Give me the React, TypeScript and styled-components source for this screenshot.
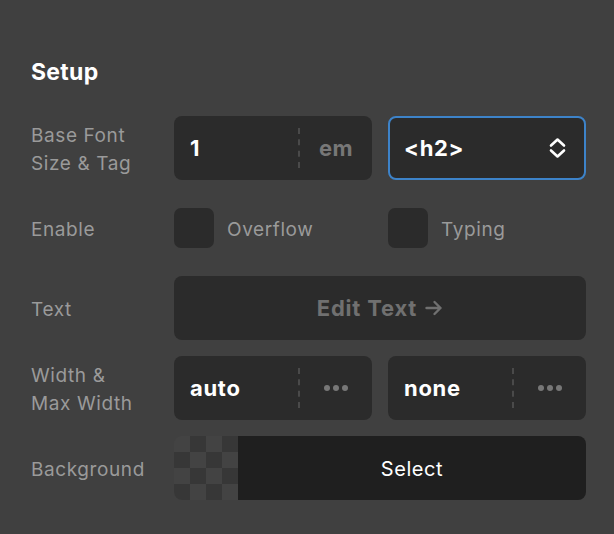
import React from "react";
import styled, { createGlobalStyle } from "styled-components";

const GlobalStyle = createGlobalStyle`
  html, body {
    margin: 0;
    padding: 0;
    background: #404040;
  }
  body {
    font-family: Inter, "Noto Sans", "Liberation Sans", sans-serif;
    -webkit-font-smoothing: antialiased;
  }
`;

const Panel = styled.div`
  width: 614px;
  height: 534px;
  box-sizing: border-box;
  padding: 58px 28px 0 31px;
  background: #404040;
`;

const Title = styled.h2`
  margin: 0 0 30px;
  font-size: 23px;
  line-height: 28px;
  font-weight: 700;
  color: #fff;
  letter-spacing: 0.3px;
`;

const Rows = styled.div`
  display: flex;
  flex-direction: column;
  gap: 16px;
`;

const Row = styled.div`
  display: grid;
  grid-template-columns: 127px 1fr 1fr;
  column-gap: 16px;
  align-items: center;
  height: 64px;
`;

const Label = styled.div`
  padding-top: 3px;
  font-size: 19px;
  line-height: 28px;
  color: #9a9a9a;
  letter-spacing: 0.6px;
  white-space: nowrap;
`;

const Field = styled.div<{ $focused?: boolean }>`
  display: flex;
  align-items: center;
  height: 64px;
  box-sizing: border-box;
  border-radius: 8px;
  background: #2b2b2b;
  border: ${(p) => (p.$focused ? "2px solid #3d83c9" : "none")};
  padding: ${(p) => (p.$focused ? "0 18px 0 14px" : "0 0 0 16px")};
`;

const Value = styled.span`
  flex: 1;
  font-size: 22px;
  font-weight: 700;
  color: #fff;
  letter-spacing: 0.7px;
`;

const Divider = styled.span`
  align-self: center;
  width: 0;
  height: 40px;
  border-left: 2px dashed #4a4a4a;
`;

const Suffix = styled.span`
  width: 72px;
  text-align: center;
  font-size: 22px;
  font-weight: 700;
  color: #777;
  letter-spacing: 0.4px;
`;

const Dots = styled.span`
  width: 72px;
  display: flex;
  justify-content: center;
  gap: 3px;

  i {
    width: 6px;
    height: 6px;
    border-radius: 50%;
    background: #777;
  }
`;

const CheckWrap = styled.label`
  display: flex;
  align-items: center;
  gap: 13px;
  font-size: 19px;
  color: #9a9a9a;
  letter-spacing: 0.6px;

  span:last-child {
    padding-top: 2px;
  }
`;

const Box = styled.span`
  width: 40px;
  height: 40px;
  border-radius: 7px;
  background: #2b2b2b;
`;

const WideButton = styled.button`
  grid-column: 2 / span 2;
  height: 64px;
  border: none;
  border-radius: 8px;
  background: #2b2b2b;
  color: #707070;
  font-family: inherit;
  font-size: 22px;
  font-weight: 700;
  letter-spacing: 0.8px;
  display: flex;
  align-items: center;
  justify-content: center;
  gap: 8px;
`;

const ColorPicker = styled.div`
  grid-column: 2 / span 2;
  display: flex;
  height: 64px;
  border-radius: 8px;
  overflow: hidden;
`;

const Checker = styled.div`
  width: 64px;
  height: 64px;
  background-color: #434343;
  background-image: conic-gradient(
    #373737 0 25%,
    transparent 0 50%,
    #373737 0 75%,
    transparent 0
  );
  background-size: 32px 32px;
`;

const SelectArea = styled.div`
  flex: 1;
  display: flex;
  align-items: center;
  justify-content: center;
  padding-top: 2px;
  background: #1f1f1f;
  color: #fff;
  font-size: 20px;
  letter-spacing: 0.6px;
`;

const Chevrons = () => (
  <svg width="17" height="22" viewBox="0 0 17 22" fill="none">
    <path
      d="M2 8.5 8.5 2.5l6.5 6M2 13.5 8.5 19.5l6.5-6"
      stroke="#fff"
      strokeWidth="2.6"
      strokeLinecap="round"
      strokeLinejoin="round"
    />
  </svg>
);

const Arrow = () => (
  <svg width="18" height="16" viewBox="0 0 18 16" fill="none">
    <path
      d="M1.5 8h14M9.5 2l6 6-6 6"
      stroke="#707070"
      strokeWidth="2.4"
      strokeLinecap="round"
      strokeLinejoin="round"
    />
  </svg>
);

const More = () => (
  <Dots>
    <i />
    <i />
    <i />
  </Dots>
);

export default function App() {
  return (
    <>
      <GlobalStyle />
      <Panel>
        <Title>Setup</Title>
        <Rows>
          <Row>
            <Label>
              Base Font
              <br />
              Size &amp; Tag
            </Label>
            <Field>
              <Value>1</Value>
              <Divider />
              <Suffix>em</Suffix>
            </Field>
            <Field $focused>
              <Value>&lt;h2&gt;</Value>
              <Chevrons />
            </Field>
          </Row>
          <Row>
            <Label>Enable</Label>
            <CheckWrap>
              <Box />
              <span>Overflow</span>
            </CheckWrap>
            <CheckWrap>
              <Box />
              <span>Typing</span>
            </CheckWrap>
          </Row>
          <Row>
            <Label>Text</Label>
            <WideButton>
              Edit Text <Arrow />
            </WideButton>
          </Row>
          <Row>
            <Label>
              Width &amp;
              <br />
              Max Width
            </Label>
            <Field>
              <Value>auto</Value>
              <Divider />
              <More />
            </Field>
            <Field>
              <Value>none</Value>
              <Divider />
              <More />
            </Field>
          </Row>
          <Row>
            <Label>Background</Label>
            <ColorPicker>
              <Checker />
              <SelectArea>Select</SelectArea>
            </ColorPicker>
          </Row>
        </Rows>
      </Panel>
    </>
  );
}
